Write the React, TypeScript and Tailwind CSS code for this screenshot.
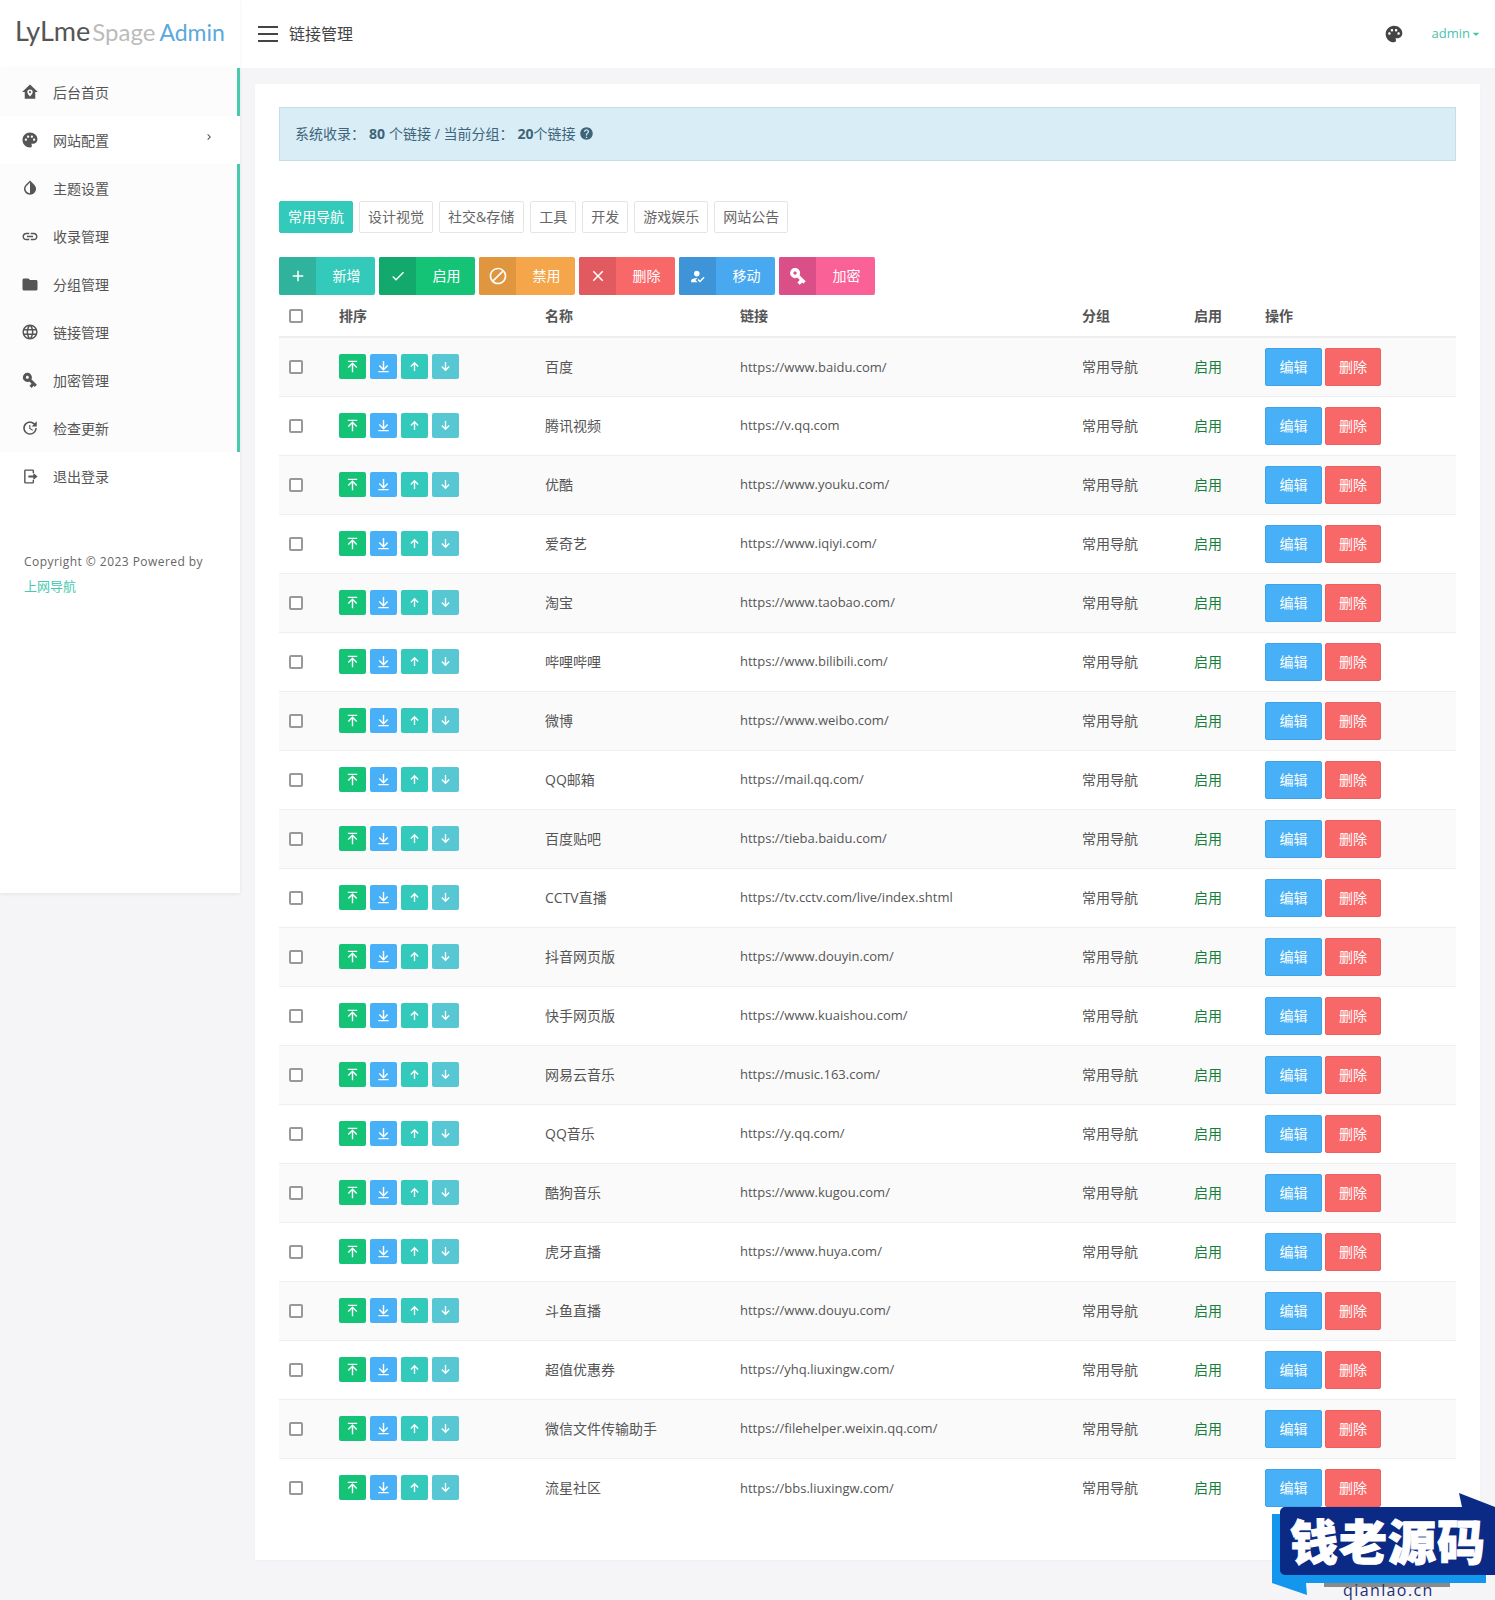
import React from "react";
import {
  MdPalette, MdLink, MdFolder, MdLanguage, MdVpnKey, MdUpdate, MdAdd, MdCheck, MdBlock, MdClose,
  MdHelp, MdArrowDropDown, MdChevronRight, MdInvertColors, MdHowToReg,
} from "react-icons/md";

const font = "font-['Open_Sans','Noto_Sans_CJK_SC',sans-serif]";

function HomeIcon({ className }: { className?: string }) {
  return (
    <svg viewBox="0 0 24 24" className={className} fill="currentColor">
      <path
        fillRule="evenodd"
        d="M12 2 1.5 12H5v9h14v-9h3.5L12 2zm0 6.5a3.6 3.6 0 0 1 3.6 3.6c0 2.4-3.6 6-3.6 6s-3.6-3.6-3.6-6A3.6 3.6 0 0 1 12 8.500zm0 2.200a1.400 1.400 0 1 0 0 2.800 1.400 1.400 0 0 0 0-2.800z"
      />
    </svg>
  );
}

function LogoutIcon({ className }: { className?: string }) {
  return (
    <svg viewBox="0 0 24 24" className={className} fill="currentColor">
      <path d="M5 2h10a2 2 0 0 1 2 2v3h-2V4H5v16h10v-3h2v3a2 2 0 0 1-2 2H5a2 2 0 0 1-2-2V4a2 2 0 0 1 2-2z" />
      <path d="M9 10.500h7V7l6 5-6 5v-3.500H9z" />
    </svg>
  );
}

function ToTop() {
  return (
    <svg viewBox="0 0 16 16" className="w-[15px] h-[15px]" fill="none" stroke="currentColor" strokeWidth="1.500">
      <path d="M3 2.500h10M8 14V5M3.500 9 8 4.500 12.500 9" />
    </svg>
  );
}

function ToBottom() {
  return (
    <svg viewBox="0 0 16 16" className="w-[15px] h-[15px]" fill="none" stroke="currentColor" strokeWidth="1.500">
      <path d="M2.500 13.500h11M8 2v9M3.500 7 8 11.500 12.500 7" />
    </svg>
  );
}

function Up() {
  return (
    <svg viewBox="0 0 12 12" className="w-[11px] h-[11px]" fill="none" stroke="currentColor" strokeWidth="1.500">
      <path d="M6 11V2M2 6l4-4 4 4" />
    </svg>
  );
}

function Down() {
  return (
    <svg viewBox="0 0 12 12" className="w-[11px] h-[11px]" fill="none" stroke="currentColor" strokeWidth="1.500">
      <path d="M6 1v9M2 6l4 4 4-4" />
    </svg>
  );
}

const menu = [
  { icon: <HomeIcon className="w-[18px] h-[18px]" />, label: "后台首页", bar: true },
  { icon: <MdPalette className="text-[18px]" />, label: "网站配置", bar: false, chevron: true },
  { icon: <MdInvertColors className="text-[20px]" />, label: "主题设置", bar: true },
  { icon: <MdLink className="text-[19px]" />, label: "收录管理", bar: true },
  { icon: <MdFolder className="text-[19px]" />, label: "分组管理", bar: true },
  { icon: <MdLanguage className="text-[18px]" />, label: "链接管理", bar: true },
  { icon: <MdVpnKey className="text-[20px] rotate-45" />, label: "加密管理", bar: true },
  { icon: <MdUpdate className="text-[18px]" />, label: "检查更新", bar: true },
  { icon: <LogoutIcon className="w-[17px] h-[17px]" />, label: "退出登录", bar: false },
];

const tabs = ["常用导航", "设计视觉", "社交&存储", "工具", "开发", "游戏娱乐", "网站公告"];

const tools = [
  { icon: <MdAdd className="text-[18px]" />, label: "新增", l: "bg-[#2fb39c]", r: "bg-[#33cabb]" },
  { icon: <MdCheck className="text-[16px]" />, label: "启用", l: "bg-[#13a96d]", r: "bg-[#15c377]" },
  { icon: <MdBlock className="text-[20px]" />, label: "禁用", l: "bg-[#e0963f]", r: "bg-[#f5a54a]" },
  { icon: <MdClose className="text-[18px]" />, label: "删除", l: "bg-[#e05a5f]", r: "bg-[#f96868]" },
  { icon: <MdHowToReg className="text-[17px]" />, label: "移动", l: "bg-[#3f94d8]", r: "bg-[#48a9f0]" },
  { icon: <MdVpnKey className="text-[20px] rotate-45" />, label: "加密", l: "bg-[#db4f88]", r: "bg-[#f96197]" },
];

const rows: [string, string][] = [
  ["百度", "https://www.baidu.com/"],
  ["腾讯视频", "https://v.qq.com"],
  ["优酷", "https://www.youku.com/"],
  ["爱奇艺", "https://www.iqiyi.com/"],
  ["淘宝", "https://www.taobao.com/"],
  ["哔哩哔哩", "https://www.bilibili.com/"],
  ["微博", "https://www.weibo.com/"],
  ["QQ邮箱", "https://mail.qq.com/"],
  ["百度贴吧", "https://tieba.baidu.com/"],
  ["CCTV直播", "https://tv.cctv.com/live/index.shtml"],
  ["抖音网页版", "https://www.douyin.com/"],
  ["快手网页版", "https://www.kuaishou.com/"],
  ["网易云音乐", "https://music.163.com/"],
  ["QQ音乐", "https://y.qq.com/"],
  ["酷狗音乐", "https://www.kugou.com/"],
  ["虎牙直播", "https://www.huya.com/"],
  ["斗鱼直播", "https://www.douyu.com/"],
  ["超值优惠券", "https://yhq.liuxingw.com/"],
  ["微信文件传输助手", "https://filehelper.weixin.qq.com/"],
  ["流星社区", "https://bbs.liuxingw.com/"],
];

function Check() {
  return <span className="block w-[14px] h-[14px] border-2 border-[#999] rounded-[2px] bg-white" />;
}

function Mini({ color, children }: { color: string; children: React.ReactNode }) {
  return (
    <span className={`flex items-center justify-center w-[27px] h-[25px] rounded-[2px] text-white ${color}`}>
      {children}
    </span>
  );
}

export default function App() {
  return (
    <div className={`relative w-[1495px] h-[1600px] overflow-hidden bg-[#f5f5f7] text-[14px] text-[#555] ${font}`}>
      <header className="flex h-[68px] bg-white">
        <div className="w-[240px] pl-[15px] pt-[13px] flex items-baseline h-[68px] leading-[36px] font-['Lato',sans-serif] shadow-[1px_0_3px_rgba(0,0,0,0.03)]">
          <span className="text-[27px] text-[#555]">LyLme</span>
          <span className="text-[24px] text-[#bbb] ml-[2px]">Spage</span>
          <span className="text-[23px] text-[#5ba9dc] ml-[4px]">Admin</span>
        </div>
        <div className="flex-1 flex items-center pl-[18px]">
          <div className="flex flex-col gap-[5px] w-[20px]">
            <span className="block h-[2px] bg-[#444]" />
            <span className="block h-[2px] bg-[#444]" />
            <span className="block h-[2px] bg-[#444]" />
          </div>
          <span className="ml-[11px] text-[16px] text-[#444]">链接管理</span>
          <MdPalette className="ml-auto text-[20px] text-[#444]" />
          <span className="ml-[28px] text-[13px] text-[#48c3ab]">admin</span>
          <MdArrowDropDown className="text-[16px] text-[#48c3ab] mr-[11px] -ml-[2px]" />
        </div>
      </header>

      <div className="flex items-start">
        <aside className="w-[240px] h-[825px] bg-white shadow-[0_1px_4px_rgba(0,0,0,0.07)]">
          {menu.map((m) => (
            <div
              key={m.label}
              className={`flex items-center h-[48px] pl-[21px] ${m.bar ? "bg-[#fcfcfc] border-r-[3px] border-[#48c9b0]" : "bg-white"}`}
            >
              <span className="flex items-center justify-center w-[18px] h-[18px] text-[#555]">{m.icon}</span>
              <span className="ml-[14px] text-[#555]">{m.label}</span>
              {m.chevron && <MdChevronRight className="ml-auto mr-[25px] -mt-[6px] text-[12px] text-[#555]" />}
            </div>
          ))}
          <div className="pl-[24px] pt-[50px] text-[12px] leading-[24px] text-[#666]">
            <div className="tracking-[0.45px]">Copyright © 2023 Powered by</div>
            <div className="text-[13px] text-[#48c9b0]">上网导航</div>
          </div>
        </aside>

        <main className="w-[1225px] h-[1476px] ml-[15px] mt-[16px] bg-white rounded-[2px] px-[24px] pt-[23px] shadow-[0_1px_2px_rgba(0,0,0,0.03)]">
          <div className="flex items-center h-[54px] pl-[15px] pb-[1px] bg-[#d9edf7] border border-[#c5dfe4] text-[#3d6478]">
            <span>系统收录：</span>
            <b className="ml-[4px]">80</b>
            <span className="ml-[4px]">个链接 / 当前分组：</span>
            <b className="ml-[4px]">20</b>
            <span>个链接</span>
            <MdHelp className="ml-[4px] text-[15px]" />
          </div>

          <div className="flex gap-[6px] mt-[40px]">
            {tabs.map((t, i) => (
              <span
                key={t}
                className={`flex items-center h-[32px] pb-[1px] pl-[8px] rounded-[2px] ${i === 2 ? "pr-[9px]" : "pr-[8px]"} ${
                  i === 0 ? "bg-[#33cabb] text-white border border-[#33cabb]" : "bg-white border border-[#e5e5e5] text-[#666]"
                }`}
              >
                {t}
              </span>
            ))}
          </div>

          <div className="flex gap-[4px] mt-[24px]">
            {tools.map((b) => (
              <span key={b.label} className={`flex w-[96px] h-[38px] rounded-[2px] overflow-hidden text-white ${b.r}`}>
                <span className={`flex items-center justify-center w-[37px] h-full ${b.l}`}>{b.icon}</span>
                <span className="flex-1 flex items-center justify-center pb-[1px] pl-[2px]">{b.label}</span>
              </span>
            ))}
          </div>

          <table className="w-[1177px] table-fixed border-collapse">
            <colgroup>
              <col className="w-[50px]" />
              <col className="w-[206px]" />
              <col className="w-[195px]" />
              <col className="w-[342px]" />
              <col className="w-[112px]" />
              <col className="w-[71px]" />
              <col />
            </colgroup>
            <thead>
              <tr className="h-[42px] border-b-2 border-[#eee] text-left font-bold text-[#555]">
                <th className="pl-[10px]"><Check /></th>
                <th className="pl-[10px]">排序</th>
                <th className="pl-[10px]">名称</th>
                <th className="pl-[10px]">链接</th>
                <th className="pl-[10px]">分组</th>
                <th className="pl-[10px]">启用</th>
                <th className="pl-[10px]">操作</th>
              </tr>
            </thead>
            <tbody>
              {rows.map(([name, url], i) => (
                <tr key={name} className={`h-[59px] border-b border-[#eee] last:border-b-0 ${i % 2 === 0 ? "bg-[#fafafa]" : "bg-white"}`}>
                  <td className="pl-[10px]"><Check /></td>
                  <td className="pl-[10px] overflow-visible">
                    <div className="flex gap-[4px] w-[121px]">
                      <Mini color="bg-[#15c377]"><ToTop /></Mini>
                      <Mini color="bg-[#48b0f7]"><ToBottom /></Mini>
                      <Mini color="bg-[#33cabb]"><Up /></Mini>
                      <Mini color="bg-[#57c7d4]"><Down /></Mini>
                    </div>
                  </td>
                  <td className="pl-[10px]">{name}</td>
                  <td className="pl-[10px] pt-[1px] whitespace-nowrap text-[13px]">{url}</td>
                  <td className="pl-[10px]">常用导航</td>
                  <td className="pl-[10px] text-[#15803d]">启用</td>
                  <td className="pl-[10px] overflow-visible">
                    <div className="flex gap-[3px] w-[120px]">
                      <span className="flex items-center justify-center w-[57px] h-[38px] rounded-[2px] bg-[#48b0f7] text-white border border-[#40a3e8]">编辑</span>
                      <span className="flex items-center justify-center w-[56px] h-[38px] rounded-[2px] bg-[#f96868] text-white border border-[#ee6060]">删除</span>
                    </div>
                  </td>
                </tr>
              ))}
            </tbody>
          </table>
        </main>
      </div>

      <div className="absolute right-0 bottom-0 w-[223px] h-[107px]">
        <svg viewBox="0 0 223 107" className="absolute inset-0 w-full h-full">
          <rect x="52" y="90" width="126" height="4" fill="#8a8a8a" />
          <path d="M0 21h214v69H34l1 12L0 90z" fill="#1296ee" />
          <path d="M13 14h177l-3-14 36 14v68H13a5 5 0 0 1-5-5V19a5 5 0 0 1 5-5z" fill="#0b2a86" />
        </svg>
        <div className="absolute left-[16px] top-[18px] w-[200px] text-center text-[48px] leading-[56px] font-black text-white whitespace-nowrap tracking-[1px] [-webkit-text-stroke:1px_white] font-['Noto_Sans_CJK_SC',sans-serif]">
          钱老源码
        </div>
        <div className="absolute left-[71px] top-[88px] text-[16px] leading-[18px] tracking-[1.4px] text-[#1c2f73]">qianlao.cn</div>
      </div>
    </div>
  );
}
